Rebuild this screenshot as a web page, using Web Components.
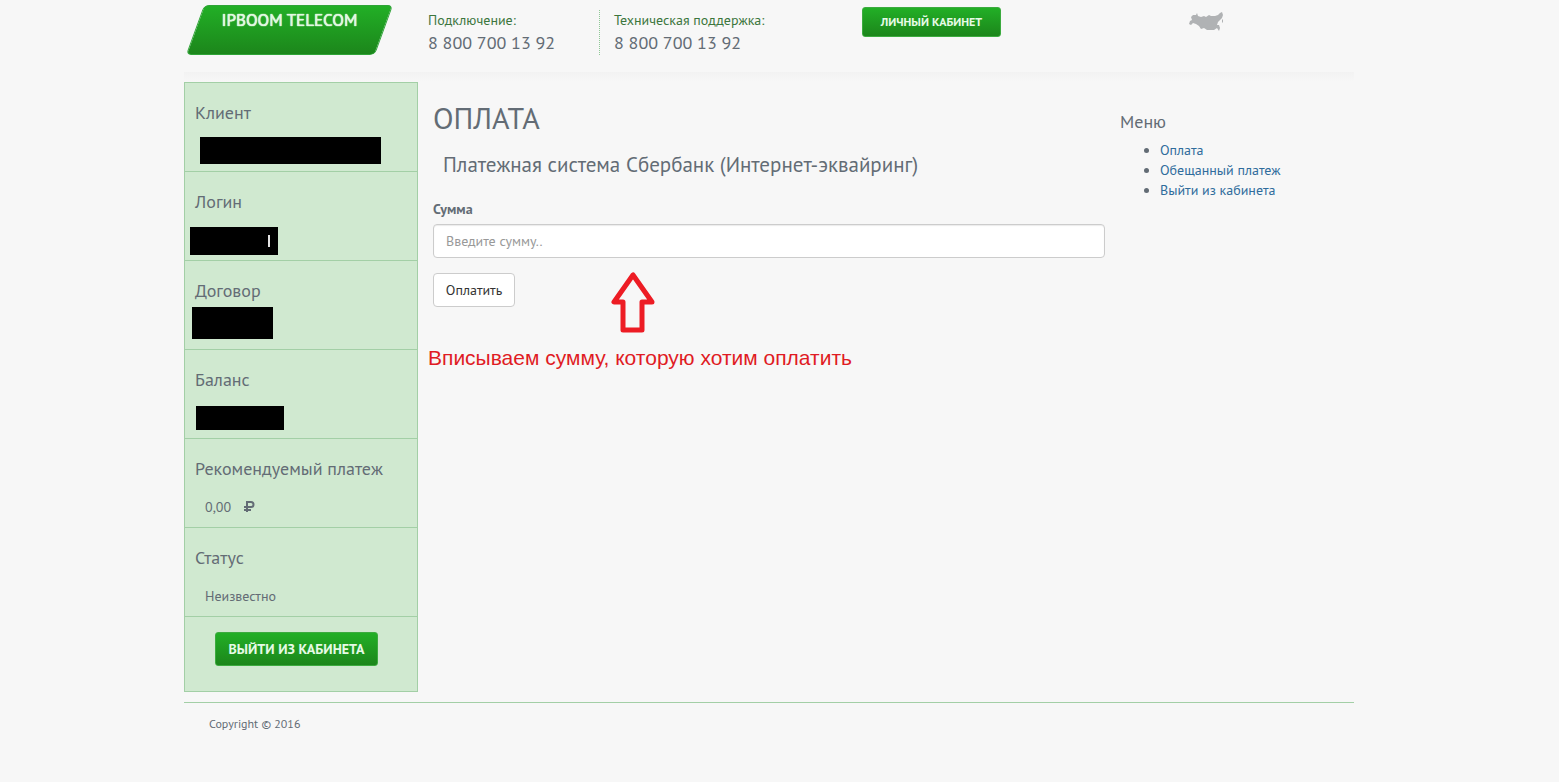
<!DOCTYPE html>
<html lang="ru">
<head>
<meta charset="utf-8">
<meta name="viewport" content="width=device-width, initial-scale=1">
<title>Оплата — IPBOOM TELECOM</title>
<style>
  body {
    margin: 0;
    padding-right: 21px;
    background: #f7f7f7;
    color: #636c75;
    font: 14px/20px "PT Sans", Roboto, "Noto Sans", sans-serif;
  }
</style>
</head>
<body>
<cabinet-page></cabinet-page>
<script>
const define = (name, html) => {
  const template = document.createElement('template');
  template.innerHTML = html;
  customElements.define(name, class extends HTMLElement {
    constructor() {
      super();
      this.attachShadow({ mode: 'open' }).append(template.content.cloneNode(true));
    }
  });
};

define('site-logo', `
<style>
  :host { display: block; padding: 5px 0 0 11px; }
  a {
    position: relative; z-index: 0; display: block; width: 189px; height: 50px;
    color: #e2f8e2; font-size: 17px; line-height: 30px; text-shadow: 0 0 1px #e2f8e2, 0 0 1px #e2f8e2;
    text-align: center; text-decoration: none;
  }
  a::before {
    content: ""; position: absolute; inset: 0; z-index: -1; box-sizing: border-box;
    border: 1px solid #2fa437; border-radius: 5px; transform: skewX(-20deg);
    background: linear-gradient(#22af26, #1c861b);
  }
</style>
<a href="#"><slot></slot></a>`);

define('phone-block', `
<style>
  :host { display: block; height: 45px; }
  .label { color: #3c763d; }
  .number { font-size: 18px; line-height: 26px; }
</style>
<div class="label"><slot name="label"></slot></div>
<div class="number"><slot></slot></div>`);

define('green-button', `
<style>
  :host { display: inline-block; --height: 34px; --pad: 12px; --size: 14px; }
  button {
    display: block; box-sizing: border-box; height: var(--height); padding: 0 var(--pad);
    border: 1px solid #3cab3f; border-radius: 3px; width: 100%;
    background: linear-gradient(#22af26, #1c861b); color: #e6fae6;
    font-family: inherit; font-size: var(--size); font-weight: 700; line-height: 20px;
    text-transform: uppercase; white-space: nowrap; cursor: pointer;
  }
</style>
<button type="button"><slot></slot></button>`);

define('region-map', `
<style>
  :host { display: block; }
  svg { display: block; width: 36px; height: 20px; }
</style>
<svg viewBox="0 0 36 20" role="img" aria-label="Россия">
  <path fill="#b0b2b4" d="M0 12L1 9L3 8L2 5L4 3L7 3L8 1L9 4L12 5L15 4L17 5L20 3L22 4L26 4L29 3L31 1L33 0L34 3L33 6L31 8L29 10L28 13L30 13L31 16L30 19L28 16L25 18L18 18L15 16L12 17L10 14L7 12L4 11L2 13ZM33 7L34 8L34 11L33 10Z"/>
</svg>`);

define('site-header', `
<style>
  :host { display: block; }
  .bar {
    display: grid; grid-template-columns: 244px 171px 263px 327px 1fr;
    align-items: start; height: 72px;
  }
  phone-block { margin-top: 10px; }
  .support { padding-left: 14px; border-left: 1px dotted #8fc896; }
  green-button {
    justify-self: start; width: 139px; margin-top: 7px;
    --height: 30px; --pad: 8px; --size: 12px;
  }
  region-map { margin-top: 12px; }
  .shade { height: 10px; background: linear-gradient(#f2f2f2, #f7f7f7); }
</style>
<header class="bar">
  <site-logo>IPBOOM TELECOM</site-logo>
  <phone-block><span slot="label">Подключение:</span>8 800 700 13 92</phone-block>
  <phone-block class="support"><span slot="label">Техническая поддержка:</span>8 800 700 13 92</phone-block>
  <green-button>Личный кабинет</green-button>
  <region-map></region-map>
</header>
<div class="shade"></div>`);

define('account-row', `
<style>
  :host { display: block; position: relative; box-sizing: border-box; height: 89px; padding: 20px 10px 10px; border-top: 1px solid #a3cfa6; }
  h4 { margin: 0 0 18px; font-size: 18px; font-weight: 400; line-height: 20px; }
  .value { display: flex; gap: 13px; padding-left: 10px; }
</style>
<h4><slot name="title"></slot></h4>
<div class="value"><slot></slot></div>`);

define('account-panel', `
<style>
  :host { display: block; box-sizing: border-box; border: solid #a3cfa6; border-width: 0 1px 1px; background: #d0e9d0; }
  .mask { position: absolute; background: #000; }
  .client { left: 15px; top: 54px; width: 181px; height: 27px; }
  .login { left: 5px; top: 55px; width: 88px; height: 28px; }
  .login::after { content: ""; position: absolute; right: 8px; top: 8px; width: 2px; height: 12px; background: #e4e4e4; }
  .contract { left: 7px; top: 46px; width: 81px; height: 32px; }
  .balance { left: 11px; top: 56px; width: 88px; height: 24px; }
  svg { align-self: center; width: 11px; height: 12px; }
  .exit { padding: 15px 30px 25px; border-top: 1px solid #a3cfa6; }
  green-button { display: block; width: 163px; }
</style>
<account-row><span slot="title">Клиент</span><span class="mask client"></span></account-row>
<account-row><span slot="title">Логин</span><span class="mask login"></span></account-row>
<account-row><span slot="title">Договор</span><span class="mask contract"></span></account-row>
<account-row><span slot="title">Баланс</span><span class="mask balance"></span></account-row>
<account-row><span slot="title">Рекомендуемый платеж</span><span>0,00</span>
  <svg viewBox="0 0 11 12" fill="none" stroke="currentColor" stroke-width="2" role="img" aria-label="руб."><path d="M3 11V1h4a2.500 2.500 0 0 1 0 5H0M0 9h7"/></svg>
</account-row>
<account-row><span slot="title">Статус</span><span>Неизвестно</span></account-row>
<div class="exit"><green-button>Выйти из кабинета</green-button></div>`);

define('payment-form', `
<style>
  :host { display: block; position: relative; padding: 20px 15px 0; }
  h1 { margin: 0 0 19px; font-size: 30px; font-weight: 400; line-height: 32px; }
  h2 { margin: 0 0 22px; padding-left: 10px; font-size: 21px; font-weight: 400; line-height: 24px; }
  label { display: block; margin-bottom: 5px; font-weight: 700; }
  input, button {
    display: block; box-sizing: border-box; height: 34px; padding: 6px 12px;
    border: 1px solid #ccc; border-radius: 4px; background: #fff; color: #333;
    font: inherit;
  }
  input { width: 100%; margin-bottom: 15px; box-shadow: inset 0 1px 1px rgba(0, 0, 0, .08); }
  input::placeholder { color: #999; opacity: 1; }
  button { cursor: pointer; width: 82px; padding: 0; }
</style>
<h1>ОПЛАТА</h1>
<h2>Платежная система Сбербанк (Интернет-эквайринг)</h2>
<form>
  <label for="sum">Сумма</label>
  <input id="sum" type="text" placeholder="Введите сумму..">
  <button type="button">Оплатить</button>
</form>
<slot></slot>`);

define('hint-note', `
<style>
  :host { position: absolute; left: 10px; top: 189px; display: block; color: #e01b24; font: 21px/24px "Liberation Sans", Arial, sans-serif; white-space: nowrap; }
  svg { display: block; width: 46px; height: 63px; margin: 0 0 12px 182px; }
</style>
<svg viewBox="0 0 46 63" aria-hidden="true"><path d="M23 4L4 31h9v28h19V31h10z" fill="none" stroke="#ed1c24" stroke-width="5" stroke-linejoin="round"/></svg>
<div><slot></slot></div>`);

define('side-menu', `
<style>
  :host { display: block; padding-top: 30px; }
  h4 { margin: 0 0 8px; font-size: 18px; font-weight: 400; line-height: 20px; }
  ul { margin: 0; padding-left: 40px; }
  a { color: #2f6c9c; text-decoration: none; }
</style>
<nav aria-label="Меню">
  <h4>Меню</h4>
  <ul>
    <li><a href="#">Оплата</a></li>
    <li><a href="#">Обещанный платеж</a></li>
    <li><a href="#">Выйти из кабинета</a></li>
  </ul>
</nav>`);

define('site-footer', `
<style>
  :host { display: block; margin-top: 10px; padding: 11px 25px; border-top: 1px solid #a3cfa6; font-size: 12px; }
</style>
<footer><slot></slot></footer>`);

define('cabinet-page', `
<style>
  :host { display: block; max-width: 1170px; margin: 0 auto; }
  .columns { display: grid; grid-template-columns: 1fr 3fr 1fr; align-items: start; }
</style>
<site-header></site-header>
<main class="columns">
  <account-panel></account-panel>
  <payment-form><hint-note>Вписываем сумму, которую хотим оплатить</hint-note></payment-form>
  <side-menu></side-menu>
</main>
<site-footer>Copyright © 2016</site-footer>`);
</script>
</body>
</html>
